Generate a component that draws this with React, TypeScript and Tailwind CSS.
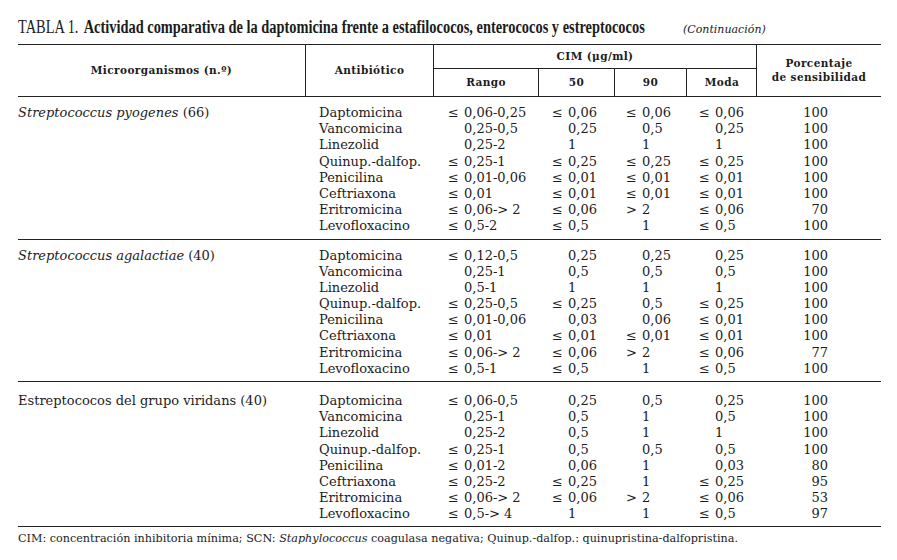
type Row = [string, string, string, string, string, string]

interface Group {
  name: React.ReactNode
  rows: Row[]
  padTop: string
  padBottom: string
}

// "≤|0,06" → prefix "≤" in its own slot, value after; "|0,25" → empty slot
const groups: Group[] = [
  {
    name: (
      <>
        <i>Streptococcus pyogenes</i> (66)
      </>
    ),
    padTop: "pt-[8px]",
    padBottom: "pb-[4px]",
    rows: [
      ["Daptomicina", "≤|0,06-0,25", "≤|0,06", "≤|0,06", "≤|0,06", "100"],
      ["Vancomicina", "|0,25-0,5", "|0,25", "|0,5", "|0,25", "100"],
      ["Linezolid", "|0,25-2", "|1", "|1", "|1", "100"],
      ["Quinup.-dalfop.", "≤|0,25-1", "≤|0,25", "≤|0,25", "≤|0,25", "100"],
      ["Penicilina", "≤|0,01-0,06", "≤|0,01", "≤|0,01", "≤|0,01", "100"],
      ["Ceftriaxona", "≤|0,01", "≤|0,01", "≤|0,01", "≤|0,01", "100"],
      ["Eritromicina", "≤|0,06-> 2", "≤|0,06", ">|2", "≤|0,06", "70"],
      ["Levofloxacino", "≤|0,5-2", "≤|0,5", "|1", "≤|0,5", "100"],
    ],
  },
  {
    name: (
      <>
        <i>Streptococcus agalactiae</i> (40)
      </>
    ),
    padTop: "pt-[8px]",
    padBottom: "pb-[4px]",
    rows: [
      ["Daptomicina", "≤|0,12-0,5", "|0,25", "|0,25", "|0,25", "100"],
      ["Vancomicina", "|0,25-1", "|0,5", "|0,5", "|0,5", "100"],
      ["Linezolid", "|0,5-1", "|1", "|1", "|1", "100"],
      ["Quinup.-dalfop.", "≤|0,25-0,5", "≤|0,25", "|0,5", "≤|0,25", "100"],
      ["Penicilina", "≤|0,01-0,06", "|0,03", "|0,06", "≤|0,01", "100"],
      ["Ceftriaxona", "≤|0,01", "≤|0,01", "≤|0,01", "≤|0,01", "100"],
      ["Eritromicina", "≤|0,06-> 2", "≤|0,06", ">|2", "≤|0,06", "77"],
      ["Levofloxacino", "≤|0,5-1", "≤|0,5", "|1", "≤|0,5", "100"],
    ],
  },
  {
    name: "Estreptococos del grupo viridans (40)",
    padTop: "pt-[11px]",
    padBottom: "pb-[3px]",
    rows: [
      ["Daptomicina", "≤|0,06-0,5", "|0,25", "|0,5", "|0,25", "100"],
      ["Vancomicina", "|0,25-1", "|0,5", "|1", "|0,5", "100"],
      ["Linezolid", "|0,25-2", "|0,5", "|1", "|1", "100"],
      ["Quinup.-dalfop.", "≤|0,25-1", "|0,5", "|0,5", "|0,5", "100"],
      ["Penicilina", "≤|0,01-2", "|0,06", "|1", "|0,03", "80"],
      ["Ceftriaxona", "≤|0,25-2", "≤|0,25", "|1", "≤|0,25", "95"],
      ["Eritromicina", "≤|0,06-> 2", "≤|0,06", ">|2", "≤|0,06", "53"],
      ["Levofloxacino", "≤|0,5-> 4", "|1", "|1", "≤|0,5", "97"],
    ],
  },
]

const cols = "grid grid-cols-[287px_128px_104px_76px_72px_71px_125px]"
const numPad = ["pl-[15px]", "pl-[15px]", "pl-[13px]", "pl-[14px]"]

function Num({ value, pad }: { value: string; pad: string }) {
  const [prefix, rest] = value.split("|")
  return (
    <div className={`${pad} whitespace-nowrap`}>
      <span className="inline-block w-[16px]">{prefix}</span>
      {rest}
    </div>
  )
}

export default function App() {
  return (
    <div className="min-h-[560px] w-[897px] bg-white px-[18px] pt-[14px] text-[#1c1c1c] font-['DejaVu_Serif',serif]">
      {/* title */}
      <div className="flex h-[30px] items-baseline">
        <div className="w-[665px] shrink-0 overflow-visible">
          <span className="inline-block origin-left scale-x-[0.80] whitespace-nowrap font-['Liberation_Serif',serif] text-[18px]">
            TABLA 1. <b className="ml-[2px]">Actividad comparativa de la daptomicina frente a estafilococos, enterococos y estreptococos</b>
          </span>
        </div>
        <span className="whitespace-nowrap text-[11px] italic">(Continuación)</span>
      </div>

      <div className="w-[863px]">
        {/* header */}
        <div className="grid grid-cols-[287px_128px_323px_125px] border-y border-[#222] text-[10.5px] font-bold tracking-[0.4px]">
          <div className="flex h-[51px] items-center justify-center">Microorganismos (n.º)</div>
          <div className="flex items-center justify-center border-l border-[#222]">Antibiótico</div>
          <div className="flex flex-col border-l border-[#222]">
            <div className="flex h-[24px] items-center justify-center border-b border-[#222]">CIM (μg/ml)</div>
            <div className="grid flex-1 grid-cols-[104px_76px_72px_71px]">
              <div className="flex items-center justify-center">Rango</div>
              <div className="flex items-center justify-center border-l border-[#222]">50</div>
              <div className="flex items-center justify-center border-l border-[#222]">90</div>
              <div className="flex items-center justify-center border-l border-[#222]">Moda</div>
            </div>
          </div>
          <div className="flex flex-col items-center justify-center border-l border-[#222] pb-[2px] leading-[14px]">
            <span>Porcentaje</span>
            <span>de sensibilidad</span>
          </div>
        </div>

        {/* body */}
        {groups.map((g, gi) => (
          <div key={gi} className={`border-b border-[#222] ${g.padTop} ${g.padBottom} text-[13px]`}>
            {g.rows.map((r, ri) => (
              <div key={ri} className={`${cols} h-[16.2px] items-center leading-[16.2px]`}>
                <div className="whitespace-nowrap">{ri === 0 ? g.name : ""}</div>
                <div className="pl-[14px] whitespace-nowrap">{r[0]}</div>
                {r.slice(1, 5).map((v, vi) => (
                  <Num key={vi} value={v} pad={numPad[vi]} />
                ))}
                <div className="pr-[53px] text-right">{r[5]}</div>
              </div>
            ))}
          </div>
        ))}

        <p className="pt-[4px] text-[11.2px] whitespace-nowrap">
          CIM: concentración inhibitoria mínima; SCN: <i>Staphylococcus</i> coagulasa negativa; Quinup.-dalfop.: quinupristina-dalfopristina.
        </p>
      </div>
    </div>
  )
}
